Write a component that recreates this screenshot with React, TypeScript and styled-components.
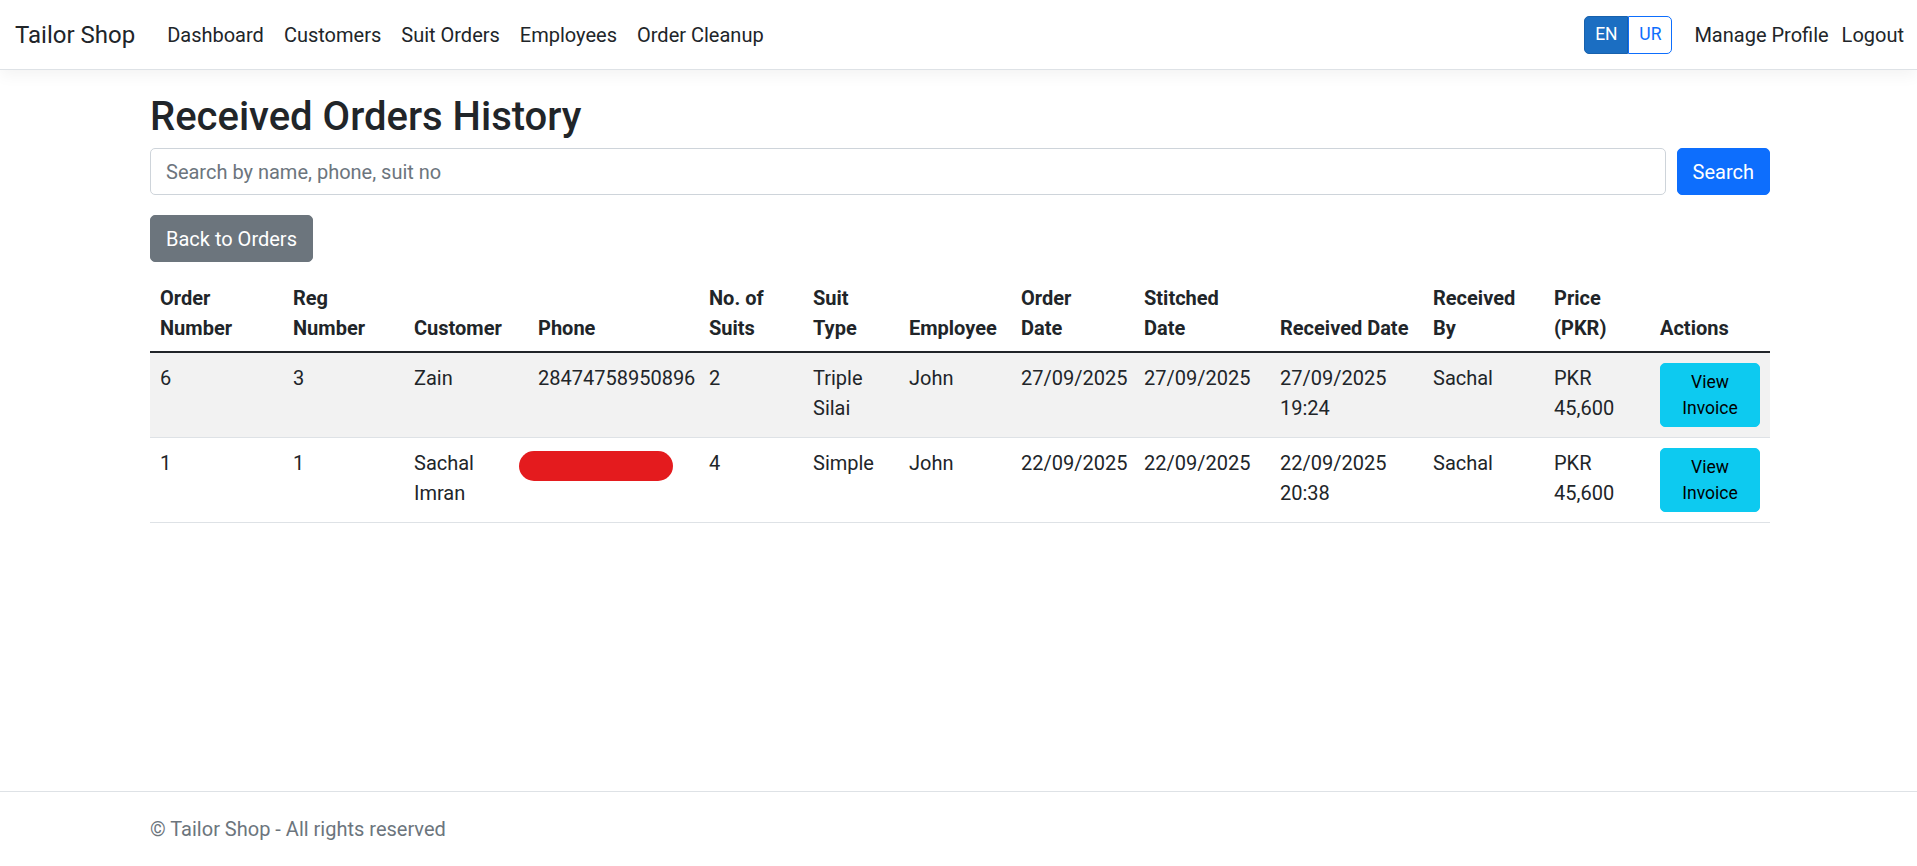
import { FC } from 'react'
import styled, { createGlobalStyle } from 'styled-components'

const GlobalStyle = createGlobalStyle`
  *, *::before, *::after {
    box-sizing: border-box;
  }
  body {
    margin: 0;
    font-family: "Segoe UI", Roboto, "Liberation Sans", sans-serif;
    font-size: 20px;
    line-height: 1.5;
    color: #212529;
    background: #fff;
  }
`

const Page = styled.div`
  min-height: 100vh;
  display: flex;
  flex-direction: column;
`

const NavBar = styled.nav`
  height: 70px;
  display: flex;
  align-items: center;
  padding: 0 13px 0 15px;
  background: #fff;
  border-bottom: 1px solid #dee2e6;
  box-shadow: 0 5px 15px rgba(0, 0, 0, 0.05);
`

const Brand = styled.a`
  font-size: 24px;
  line-height: 1.5;
  color: #212529;
  text-decoration: none;
  margin-right: 22px;
`

const NavList = styled.ul`
  display: flex;
  align-items: center;
  list-style: none;
  margin: 0;
  padding: 0;
  flex: 1;
`

const NavLink = styled.a<{ $last?: boolean }>`
  display: block;
  padding: 6px ${p => (p.$last ? '0' : '10px')} 6px ${p => (p.$last ? '3px' : '10px')};
  color: #212529;
  text-decoration: none;
`

const LangGroup = styled.div`
  display: flex;
  margin-right: 12px;
`

const LangButton = styled.button<{ $active?: boolean }>`
  width: 44px;
  height: 38px;
  font: inherit;
  font-size: 17.5px;
  padding: 0;
  cursor: pointer;
  border: 1px solid ${p => (p.$active ? '#1861ac' : '#0d6efd')};
  background: ${p => (p.$active ? '#1b6ec2' : '#fff')};
  color: ${p => (p.$active ? '#fff' : '#0d6efd')};
  &:first-child {
    border-radius: 5px 0 0 5px;
  }
  &:last-child {
    border-radius: 0 5px 5px 0;
  }
`

const Container = styled.div`
  width: 1623px;
  margin: 0 auto;
  padding-left: 3px;
`

const Main = styled.main`
  padding-top: 23px;
  padding-bottom: 20px;
`

const Title = styled.h2`
  font-size: 40px;
  font-weight: 500;
  line-height: 1.2;
  margin: 0 0 7px;
`

const SearchForm = styled.form`
  display: flex;
  gap: 11px;
  margin-bottom: 20px;
`

const SearchInput = styled.input`
  flex: 1;
  height: 47px;
  padding: 0 15px;
  font: inherit;
  color: #212529;
  border: 1px solid #ced4da;
  border-radius: 5px;
  &::placeholder {
    color: #6c757d;
  }
`

const Button = styled.button<{ $variant: 'primary' | 'secondary' }>`
  height: 47px;
  padding: 0 15px;
  font: inherit;
  color: #fff;
  border: 1px solid ${p => (p.$variant === 'primary' ? '#0d6efd' : '#6c757d')};
  background: ${p => (p.$variant === 'primary' ? '#0d6efd' : '#6c757d')};
  border-radius: 5px;
  cursor: pointer;
`

const Table = styled.table`
  width: 100%;
  margin-top: 11px;
  border-collapse: collapse;
  table-layout: fixed;
`

const Th = styled.th`
  padding: 10px 10px 8px;
  text-align: left;
  font-weight: 700;
  vertical-align: bottom;
  border-bottom: 2px solid #212529;
`

const HeadLine = styled.span`
  display: block;
`

const Row = styled.tr`
  &:nth-child(odd) {
    background: #f2f2f2;
  }
`

const Td = styled.td`
  padding: 10px;
  vertical-align: top;
  border-bottom: 1px solid #dee2e6;
`

const PhoneCell = styled(Td)`
  position: relative;
  white-space: nowrap;
`

const Redaction = styled.span`
  position: absolute;
  left: -9px;
  top: 13px;
  width: 154px;
  height: 30px;
  border-radius: 15px;
  background: #e41b1e;
`

const InvoiceButton = styled.button`
  display: block;
  font: inherit;
  font-size: 17.5px;
  line-height: 26px;
  padding: 5px 10px;
  color: #000;
  background: #0dcaf0;
  border: 1px solid #0dcaf0;
  border-radius: 5px;
  cursor: pointer;
`

const Footer = styled.footer`
  margin-top: auto;
  border-top: 1px solid #dee2e6;
  line-height: 74px;
  color: #6c757d;
  white-space: nowrap;
`

interface IOrder {
  orderNumber: number
  regNumber: number
  customer: string
  phone: string | null
  suits: number
  suitType: string
  employee: string
  orderDate: string
  stitchedDate: string
  receivedDate: string
  receivedBy: string
  price: string
}

const columns: { lines: string[]; width: number }[] = [
  { lines: ['Order', 'Number'], width: 133 },
  { lines: ['Reg', 'Number'], width: 121 },
  { lines: ['Customer'], width: 124 },
  { lines: ['Phone'], width: 171 },
  { lines: ['No. of', 'Suits'], width: 104 },
  { lines: ['Suit', 'Type'], width: 96 },
  { lines: ['Employee'], width: 112 },
  { lines: ['Order', 'Date'], width: 123 },
  { lines: ['Stitched', 'Date'], width: 136 },
  { lines: ['Received Date'], width: 153 },
  { lines: ['Received', 'By'], width: 121 },
  { lines: ['Price', '(PKR)'], width: 106 },
  { lines: ['Actions'], width: 120 },
]

const orders: IOrder[] = [
  {
    orderNumber: 6,
    regNumber: 3,
    customer: 'Zain',
    phone: '28474758950896',
    suits: 2,
    suitType: 'Triple Silai',
    employee: 'John',
    orderDate: '27/09/2025',
    stitchedDate: '27/09/2025',
    receivedDate: '27/09/2025 19:24',
    receivedBy: 'Sachal',
    price: 'PKR 45,600',
  },
  {
    orderNumber: 1,
    regNumber: 1,
    customer: 'Sachal Imran',
    phone: null,
    suits: 4,
    suitType: 'Simple',
    employee: 'John',
    orderDate: '22/09/2025',
    stitchedDate: '22/09/2025',
    receivedDate: '22/09/2025 20:38',
    receivedBy: 'Sachal',
    price: 'PKR 45,600',
  },
]

const navItems = ['Dashboard', 'Customers', 'Suit Orders', 'Employees', 'Order Cleanup']

const App: FC = () => {
  return (
    <Page>
      <GlobalStyle />
      <NavBar>
        <Brand href="#">Tailor Shop</Brand>
        <NavList>
          {navItems.map(item => (
            <li key={item}>
              <NavLink href="#">{item}</NavLink>
            </li>
          ))}
        </NavList>
        <LangGroup>
          <LangButton $active>EN</LangButton>
          <LangButton>UR</LangButton>
        </LangGroup>
        <NavLink href="#">Manage Profile</NavLink>
        <NavLink href="#" $last>
          Logout
        </NavLink>
      </NavBar>

      <Container>
        <Main>
          <Title>Received Orders History</Title>
          <SearchForm onSubmit={e => e.preventDefault()}>
            <SearchInput placeholder="Search by name, phone, suit no" />
            <Button $variant="primary" type="submit">
              Search
            </Button>
          </SearchForm>
          <Button $variant="secondary">Back to Orders</Button>

          <Table>
            <colgroup>
              {columns.map((c, i) => (
                <col key={i} style={{ width: c.width }} />
              ))}
            </colgroup>
            <thead>
              <tr>
                {columns.map((c, i) => (
                  <Th key={i}>
                    {c.lines.map(l => (
                      <HeadLine key={l}>{l}</HeadLine>
                    ))}
                  </Th>
                ))}
              </tr>
            </thead>
            <tbody>
              {orders.map(o => (
                <Row key={o.orderNumber}>
                  <Td>{o.orderNumber}</Td>
                  <Td>{o.regNumber}</Td>
                  <Td>{o.customer}</Td>
                  <PhoneCell>{o.phone ?? <Redaction />}</PhoneCell>
                  <Td>{o.suits}</Td>
                  <Td>{o.suitType}</Td>
                  <Td>{o.employee}</Td>
                  <Td>{o.orderDate}</Td>
                  <Td>{o.stitchedDate}</Td>
                  <Td>{o.receivedDate}</Td>
                  <Td>{o.receivedBy}</Td>
                  <Td>{o.price}</Td>
                  <Td>
                    <InvoiceButton>View Invoice</InvoiceButton>
                  </Td>
                </Row>
              ))}
            </tbody>
          </Table>
        </Main>
      </Container>

      <Footer>
        <Container>© Tailor Shop - All rights reserved</Container>
      </Footer>
    </Page>
  )
}

export default App
